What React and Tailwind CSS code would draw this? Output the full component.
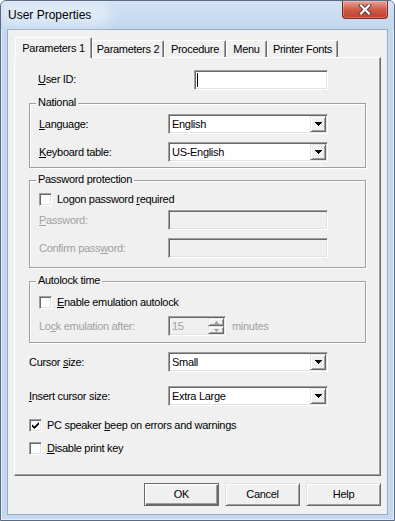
const T = "text-[11px] leading-[13px] tracking-[-0.3px]"
const sunken =
  "border border-t-[#a0a0a0] border-l-[#a0a0a0] border-r-white border-b-white shadow-[inset_1px_1px_0_#696969,inset_-1px_-1px_0_#e3e3e3]"
const raised =
  "border border-t-[#e3e3e3] border-l-[#e3e3e3] border-r-[#696969] border-b-[#696969] shadow-[inset_1px_1px_0_#fff,inset_-1px_-1px_0_#a0a0a0] bg-[#f0f0f0]"

function U({ children }) {
  return <span className="underline decoration-1 underline-offset-[1px]">{children}</span>
}

function Select({ value }) {
  return (
    <div className={`${sunken} w-[160px] h-[20px] bg-white p-px flex items-center`}>
      <span className="flex-1 pl-[2px] text-black">{value}</span>
      <div className={`${raised} w-[16px] h-[16px] flex items-center justify-center`}>
        <svg width="7" height="4" viewBox="0 0 7 4" shapeRendering="crispEdges">
          <polygon points="0,0 7,0 3.5,4" fill="#000" />
        </svg>
      </div>
    </div>
  )
}

function Field({ disabled, wide = 160, children }) {
  return (
    <div
      className={`${sunken} h-[20px] p-px flex items-center ${disabled ? 'bg-[#f0f0f0]' : 'bg-white'}`}
      style={{ width: wide }}
    >
      {children}
    </div>
  )
}

function Check({ checked }) {
  return (
    <div className={`${sunken} w-[13px] h-[13px] bg-white flex items-center justify-center shrink-0`}>
      {checked && (
        <svg width="7" height="7" viewBox="0 0 7 7">
          <polygon points="0,2.2 2.4,4.5 7,0 7,2.6 2.4,7 0,4.8" fill="#000" />
        </svg>
      )}
    </div>
  )
}

function Group({ title, className, children }) {
  return (
    <div
      className={`relative ml-[14px] w-[337px] border border-[#a0a0a0] shadow-[inset_1px_1px_0_#fff,1px_1px_0_#fff] ${className}`}
    >
      <span className="absolute left-[6px] top-[-8px] px-[2px] bg-[#f0f0f0] text-black">{title}</span>
      {children}
    </div>
  )
}

function Tab({ label, width, active }) {
  return (
    <div
      className={`${
        active ? 'h-[21px] -mb-px relative z-10' : 'h-[17px]'
      } bg-[#f0f0f0] border-l border-t border-white border-r border-r-[#696969] rounded-t-[2px] shadow-[inset_-1px_0_0_#a0a0a0] flex items-center justify-center shrink-0`}
      style={{ width }}
    >
      {label}
    </div>
  )
}

function Button({ label, primary }) {
  return (
    <div
      className={`w-[75px] h-[23px] flex items-center justify-center bg-[#f0f0f0] ${
        primary
          ? 'border border-[#696969] shadow-[inset_1px_1px_0_#fff,inset_-1px_-1px_0_#696969,inset_-2px_-2px_0_#a0a0a0]'
          : raised
      }`}
    >
      {label}
    </div>
  )
}

export default function App() {
  return (
    <div className="w-[395px] h-[521px] border border-[#5b6b82] rounded-t-[6px] bg-[#c4d8f0] shadow-[inset_0_0_0_1px_rgba(255,255,255,0.55)] flex flex-col font-['Liberation_Sans',Arial,sans-serif] overflow-hidden">
      {/* title bar */}
      <div className="relative h-[28px] flex justify-between bg-gradient-to-b from-[#d3e3f5] to-[#c2d7ef] shrink-0">
        <span className="absolute left-[0px] top-[3px] w-[110px] h-[22px] rounded-full bg-white/40 blur-[6px]" />
        <span className="relative self-center pl-[7px] text-[12px] leading-[15px] text-black">User Properties</span>
        <div className="relative mr-[6px] w-[46px] h-[18px] rounded-b-[4px] border border-t-0 border-[#7c2a20] bg-gradient-to-b from-[#e8a497] via-[#cf5a48] to-[#c1402d] shadow-[inset_0_0_0_1px_rgba(255,255,255,0.25)] flex items-center justify-center">
          <svg width="14" height="11" viewBox="0 0 14 11">
            <path d="M3 1.5 L11 9.5 M11 1.5 L3 9.5" stroke="#5a3a36" strokeWidth="4" strokeLinecap="square" />
            <path d="M3 1.5 L11 9.5 M11 1.5 L3 9.5" stroke="#fff" strokeWidth="2.2" strokeLinecap="square" />
          </svg>
        </div>
      </div>

      {/* client */}
      <div className={`ml-[6px] w-[381px] h-[486px] border border-[#98abc6] bg-[#f0f0f0] flex flex-col text-black ${T}`}>
        <div className="mt-[7px] ml-[7px] h-[20px] flex items-end">
          <Tab label="Parameters 1" width={77} active />
          <Tab label="Parameters 2" width={72} />
          <Tab label="Procedure" width={62} />
          <Tab label="Menu" width={41} />
          <Tab label="Printer Fonts" width={71} />
        </div>

        <div className="ml-[6px] w-[367px] h-[419px] border border-t-white border-l-white border-r-[#696969] border-b-[#696969] shadow-[inset_-1px_-1px_0_#a0a0a0] flex flex-col">
          <div className="mt-[12px] h-[20px] flex items-center pl-[23px]">
            <span className="w-[156px] pb-[2px]">
              <U>U</U>ser ID:
            </span>
            <Field wide={134}>
              <span className="ml-[1px] w-px h-[14px] bg-black" />
            </Field>
          </div>

          <Group title="National" className="mt-[13px] pb-[5px]">
            <div className="mt-[10px] h-[20px] flex items-center pl-[9px]">
              <span className="w-[129px]">
                <U>L</U>anguage:
              </span>
              <Select value="English" />
            </div>
            <div className="mt-[8px] h-[20px] flex items-center pl-[9px]">
              <span className="w-[129px]">
                <U>K</U>eyboard table:
              </span>
              <Select value="US-English" />
            </div>
          </Group>

          <Group title="Password protection" className="mt-[12px] pb-[9px]">
            <div className="mt-[12px] h-[13px] flex items-center pl-[9px]">
              <Check />
              <span className="ml-[5px]">
                Logon password <U>r</U>equired
              </span>
            </div>
            <div className="mt-[4px] h-[20px] flex items-center pl-[9px] text-[#a0a0a0]">
              <span className="w-[129px]">
                <U>P</U>assword:
              </span>
              <Field disabled />
            </div>
            <div className="mt-[8px] h-[20px] flex items-center pl-[9px] text-[#a0a0a0]">
              <span className="w-[129px]">
                Confirm pass<U>w</U>ord:
              </span>
              <Field disabled />
            </div>
          </Group>

          <Group title="Autolock time" className="mt-[13px] pb-[6px]">
            <div className="mt-[14px] h-[13px] flex items-center pl-[9px]">
              <Check />
              <span className="ml-[5px]">
                <U>E</U>nable emulation autolock
              </span>
            </div>
            <div className="mt-[7px] h-[20px] flex items-center pl-[9px] text-[#a0a0a0]">
              <span className="w-[129px]">
                Lo<U>c</U>k emulation after:
              </span>
              <Field disabled wide={58}>
                <span className="flex-1 pl-[2px]">15</span>
                <div className="w-[16px] h-[16px] flex flex-col">
                  <div className={`${raised} h-[8px] flex items-center justify-center`}>
                    <svg width="5" height="3" viewBox="0 0 5 3">
                      <polygon points="2.5,0 5,3 0,3" fill="#a0a0a0" />
                    </svg>
                  </div>
                  <div className={`${raised} h-[8px] flex items-center justify-center`}>
                    <svg width="5" height="3" viewBox="0 0 5 3">
                      <polygon points="0,0 5,0 2.5,3" fill="#a0a0a0" />
                    </svg>
                  </div>
                </div>
              </Field>
              <span className="ml-[6px]">minutes</span>
            </div>
          </Group>

          <div className="mt-[9px] h-[20px] flex items-center pl-[14px]">
            <span className="w-[139px]">
              Cursor <U>s</U>ize:
            </span>
            <Select value="Small" />
          </div>
          <div className="mt-[14px] h-[20px] flex items-center pl-[14px]">
            <span className="w-[139px]">
              <U>I</U>nsert cursor size:
            </span>
            <Select value="Extra Large" />
          </div>
          <div className="mt-[13px] h-[13px] flex items-center pl-[14px]">
            <Check checked />
            <span className="ml-[5px]">
              PC speaker <U>b</U>eep on errors and warnings
            </span>
          </div>
          <div className="mt-[10px] h-[13px] flex items-center pl-[14px]">
            <Check />
            <span className="ml-[5px]">
              <U>D</U>isable print key
            </span>
          </div>
        </div>

        <div className="mt-[7px] flex justify-end gap-[6px] pr-[6px]">
          <Button label="OK" primary />
          <Button label="Cancel" />
          <Button label="Help" />
        </div>
      </div>
    </div>
  )
}
